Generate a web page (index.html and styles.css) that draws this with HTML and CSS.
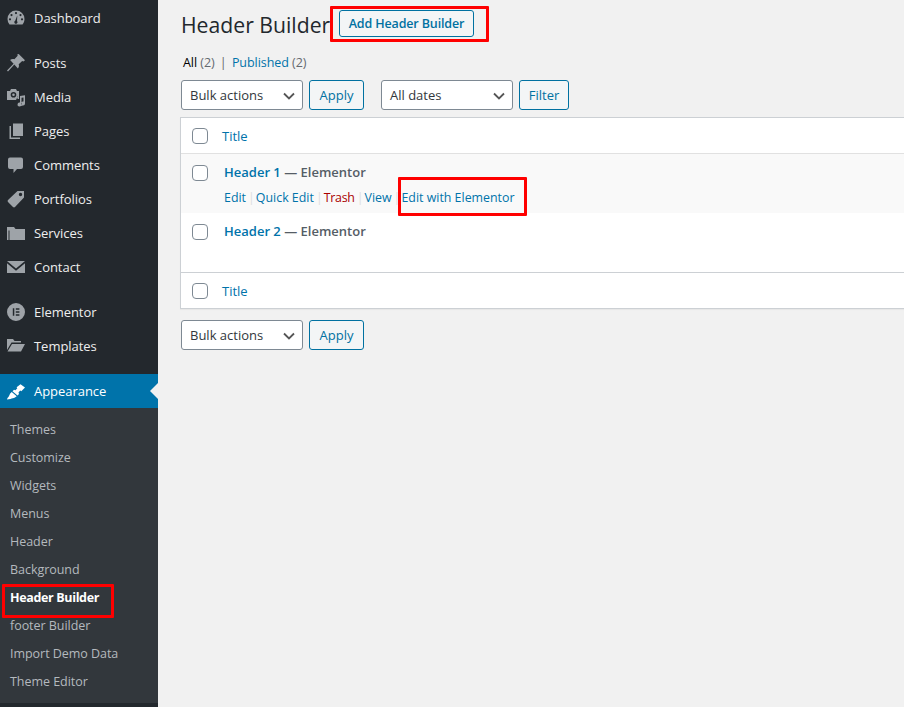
FILE: index.html
```html
<!DOCTYPE html>
<html lang="en">
<head>
<meta charset="utf-8">
<title>Header Builder</title>
<link rel="stylesheet" href="styles.css">
</head>
<body>
<div class="app">
  <nav class="sidebar">
    <ul class="menu menu-first">
      <li class="item"><svg class="ico" viewBox="0 0 20 20"><path fill-rule="evenodd" d="M10 2.500a8.500 8.500 0 0 1 8.500 8.500c0 2-.7 4-2 5.500h-13a8.500 8.500 0 0 1-2-5.500A8.500 8.500 0 0 1 10 2.500zM10 4a1.100 1.100 0 1 0 0 2.200A1.100 1.100 0 0 0 10 4zM5.500 6a1.100 1.100 0 1 0 0 2.200 1.100 1.100 0 0 0 0-2.200zM14.500 6a1.100 1.100 0 1 0 0 2.200 1.100 1.100 0 0 0 0-2.200zM4 10.200a1.100 1.100 0 1 0 0 2.200 1.100 1.100 0 0 0 0-2.200zM16 10.200a1.100 1.100 0 1 0 0 2.200 1.100 1.100 0 0 0 0-2.200zM11.300 7.500L9.200 12.700a1.600 1.600 0 1 0 1.800.3z"/></svg>Dashboard</li>
    </ul>
    <ul class="menu menu-plain">
      <li class="item"><svg class="ico" viewBox="0 0 20 20"><path d="M12.700 1l6.300 6.300-1.600 1.200-1.200-.6-3.500 3.300c.6 1.700.2 3-.8 4.300L8.300 11.400 2 18.500l-1-.9 6.600-6.900L4.100 7.100c1.200-1 2.600-1.400 4.300-.8l3.300-3.500-.5-1.200z"/></svg>Posts</li>
      <li class="item"><svg class="ico" viewBox="0 0 20 20"><path fill-rule="evenodd" d="M1 4h3l1-2h5l1 2h2v8h-1.500V9H12l-2 4H1zM7.500 5a2.800 2.800 0 1 0 0 5.600 2.800 2.800 0 0 0 0-5.600zM7.500 6.500a1.300 1.300 0 1 1 0 2.600 1.300 1.300 0 0 1 0-2.600zM14 9l5-.8v8.300a2 2 0 1 1-1.500-1.900V10.500l-2 .3v6.700A2 2 0 1 1 14 15.600z"/></svg>Media</li>
      <li class="item"><svg class="ico" viewBox="0 0 20 20"><path d="M7 2.500h10v12.500H7zM5 5v11.500h9V18H3.500V5z"/></svg>Pages</li>
      <li class="item"><svg class="ico" viewBox="0 0 20 20"><path d="M4 2.500h11a2 2 0 0 1 2 2V12a2 2 0 0 1-2 2h-4L7.500 18v-4H4a2 2 0 0 1-2-2V4.500a2 2 0 0 1 2-2z"/></svg>Comments</li>
      <li class="item"><svg class="ico" viewBox="0 0 20 20"><path fill-rule="evenodd" d="M11.500 2H18v6.500L9 18a1.500 1.500 0 0 1-2 0l-5-5a1.500 1.500 0 0 1 0-2zM14.500 3.800a1.700 1.700 0 1 0 0 3.400 1.700 1.700 0 0 0 0-3.400z"/></svg>Portfolios</li>
      <li class="item"><svg class="ico" viewBox="0 0 20 20"><path d="M1 4h7l1.500 2H19v11H3.500V7.500H2.500V17H1z"/></svg>Services</li>
      <li class="item"><svg class="ico" viewBox="0 0 20 20"><path d="M1 4h18L10 11.500zM1 6.300l9 7.500 9-7.500V16H1z"/></svg>Contact</li>
    </ul>
    <ul class="menu">
      <li class="item"><svg class="ico ico-e" viewBox="0 0 20 20"><path fill-rule="evenodd" d="M10 1a9 9 0 1 1 0 18 9 9 0 0 1 0-18zM6.800 6.200v7.600h1.500V6.200zM9.800 6.200v1.500h3.600V6.200zM9.800 9.250v1.500h3.600v-1.500zM9.800 12.300v1.500h3.600v-1.500z"/></svg>Elementor</li>
      <li class="item"><svg class="ico" viewBox="0 0 20 20"><path d="M1 14V3h6l1.500 2H15v1.500H5.500zM1.500 15.500L6 8h13l-4 7.500z"/></svg>Templates</li>
    </ul>
    <div class="current">
      <div class="item item-current"><svg class="ico" viewBox="0 0 20 20"><path d="M14.500 3.200L19 6.500l-3.700 3.700-1.100-.7-1.700 2 .5 1.500-1.500 1.500-5-4.300L8 8.800l1.500.5 1.800-2.100-.7-1zM5.700 11l5 4.300-1.700 1.200c-1.500 1-3 .5-4.500 1.500l-3.500.5.500-1.500c1.500-1.500 2-3 2.500-4.300z"/></svg>Appearance</div>
      <ul class="sub">
        <li>Themes</li>
        <li>Customize</li>
        <li>Widgets</li>
        <li>Menus</li>
        <li>Header</li>
        <li>Background</li>
        <li class="sub-current">Header Builder</li>
        <li>footer Builder</li>
        <li>Import Demo Data</li>
        <li>Theme Editor</li>
      </ul>
    </div>
    <span class="mark mark-side"></span>
  </nav>
  <main class="content">
    <div class="head">
      <h1 class="title">Header Builder</h1>
      <a class="btn btn-add">Add Header Builder</a>
    </div>
    <p class="views"><span class="view-all">All</span> <span class="count">(2)</span> <span class="sep-v">|</span> <a class="link">Published</a> <span class="count">(2)</span></p>
    <div class="controls">
      <div class="select select-bulk">Bulk actions<svg class="chev" viewBox="0 0 12 8"><path d="M1 1.500l5 5 5-5"/></svg></div>
      <a class="btn btn-apply">Apply</a>
      <div class="select select-dates">All dates<svg class="chev" viewBox="0 0 12 8"><path d="M1 1.500l5 5 5-5"/></svg></div>
      <a class="btn btn-filter">Filter</a>
    </div>
    <div class="table">
      <div class="row row-head"><span class="check"></span><a class="link">Title</a></div>
      <div class="row row-post row-alt">
        <span class="check"></span>
        <div class="post">
          <div class="post-title"><a class="link strong">Header 1</a> <span class="state">— Elementor</span></div>
          <div class="actions"><a class="link">Edit</a><i class="sep">|</i><a class="link">Quick Edit</a><i class="sep">|</i><a class="trash">Trash</a><i class="sep">|</i><a class="link">View</a><i class="sep">|</i><a class="link">Edit with Elementor</a></div>
        </div>
      </div>
      <div class="row row-post">
        <span class="check"></span>
        <div class="post">
          <div class="post-title"><a class="link strong">Header 2</a> <span class="state">— Elementor</span></div>
        </div>
      </div>
      <div class="row row-foot"><span class="check"></span><a class="link">Title</a></div>
    </div>
    <div class="controls controls-bottom">
      <div class="select select-bulk">Bulk actions<svg class="chev" viewBox="0 0 12 8"><path d="M1 1.500l5 5 5-5"/></svg></div>
      <a class="btn btn-apply">Apply</a>
    </div>
    <span class="mark mark-add"></span>
    <span class="mark mark-edit"></span>
  </main>
</div>
</body>
</html>
```

FILE: styles.css
```css
* { box-sizing: border-box; }
html, body { margin: 0; padding: 0; height: 100%; }
body { font-family: "Open Sans", "Noto Sans", sans-serif; font-size: 13px; color: #3c434a; background: #f1f1f1; overflow: hidden; }
ul { list-style: none; margin: 0; padding: 0; }
a { text-decoration: none; }
.app { display: flex; height: 707px; overflow: hidden; }

.sidebar { position: relative; flex: 0 0 158px; background: #23282d; color: #eee; font-size: 13px; letter-spacing: -0.04px; }
.menu { padding-top: 11px; }
.menu-first { padding-top: 1px; height: 46px; }
.menu-plain { padding-top: 0; }
.item { display: flex; align-items: center; height: 34px; padding-left: 6px; gap: 8px; }
.ico { width: 20px; height: 20px; fill: #9ea3a8; flex: none; }
.current { margin-top: 11px; }
.item-current { background: #0073aa; color: #fff; position: relative; }
.item-current .ico { fill: #fff; }
.item-current::after { content: ""; position: absolute; right: 0; top: 9px; border: 8px solid transparent; border-right-color: #f1f1f1; border-left-width: 0; }
.sub { background: #32373c; padding: 8px 0 7px; font-size: 12.5px; color: #b4b9be; }
.sub li { height: 28px; line-height: 28px; padding-left: 10px; }
.sub .sub-current { color: #fff; font-weight: 700; letter-spacing: -0.35px; }

.content { position: relative; flex: 1; min-width: 0; padding-left: 22px; }
.head { display: flex; align-items: flex-start; height: 51px; padding-top: 10px; }
.title { margin: 0 0 0 1px; font-size: 21.200px; font-weight: 400; line-height: 29px; color: #23282d; width: 158px; white-space: nowrap; }
.btn { display: inline-flex; align-items: center; justify-content: center; height: 30px; font-size: 13px; color: #0071a1; background: #f3f5f6; border: 1px solid #0071a1; border-radius: 3px; }
.btn-add { width: 135px; height: 27px; font-weight: 600; font-size: 12.5px; letter-spacing: -0.14px; }
.btn-apply { width: 55px; }
.btn-filter { width: 50px; }
.views { margin: 0 0 0 3px; height: 19px; line-height: 24px; font-size: 12.5px; color: #646970; letter-spacing: -0.05px; }
.view-all { color: #000; }
.count { color: #646970; }
.sep-v { color: #666; margin: 0 2px; }
.link { color: #0073aa; }
.controls { display: flex; align-items: center; height: 30px; margin: 10px 0 0 1px; gap: 6px; }
.controls-bottom { margin-top: 11px; }
.select { position: relative; display: flex; align-items: center; height: 30px; padding-left: 8px; background: #fff; border: 1px solid #7e8993; border-radius: 3px; color: #32373c; }
.select-bulk { width: 122px; }
.select-dates { width: 132px; margin-left: 11px; }
.chev { position: absolute; right: 7px; top: 11px; width: 12px; height: 8px; fill: none; stroke: #555; stroke-width: 1.800; }
.table { margin-top: 7px; background: #fff; border: 1px solid #ccd0d4; border-right: 0; height: 192px; box-shadow: 0 1px 1px rgba(0,0,0,.04); }
.row { display: flex; padding-left: 11px; }
.row-head { height: 36px; align-items: center; border-bottom: 1px solid #e1e1e1; gap: 14px; }
.row-foot { height: 36px; align-items: center; border-top: 1px solid #ccd0d4; gap: 14px; }
.row-post { height: 59px; padding-top: 10px; gap: 16px; }
.row-post .check { margin-top: 1px; }
.row-alt { background: #f9f9f9; }
.check { flex: none; width: 16px; height: 16px; background: #fff; border: 1px solid #7e8993; border-radius: 4px; }
.post-title { font-size: 13px; line-height: 16px; color: #555d66; }
.strong { font-weight: 600; }
.state { font-weight: 600; color: #555d66; }
.actions { margin-top: 9px; font-size: 12.400px; line-height: 18px; display: flex; }
.sep { font-style: normal; color: #ddd; margin: 0 1px 0 2px; }
.trash { color: #a00; letter-spacing: -0.25px; }

.mark { position: absolute; border: 3px solid #f00; border-radius: 1px; pointer-events: none; }
.mark-side { left: 2px; top: 584px; width: 112px; height: 34px; }
.mark-add { left: 172px; top: 6px; width: 159px; height: 36px; }
.mark-edit { left: 240px; top: 177px; width: 129px; height: 39px; }
```
